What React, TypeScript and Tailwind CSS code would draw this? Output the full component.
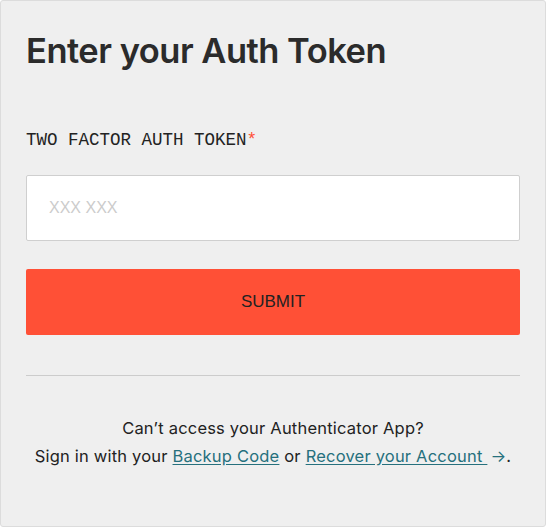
export default function App() {
  return (
    <div className="h-[527px] w-[546px] bg-white">
      <div className="h-[527px] w-[546px] rounded-[3px] border border-[#dcdcdc] bg-[#efefef] px-[25px] pt-[26px]" style={{ fontFamily: 'Inter, "Liberation Sans", sans-serif' }}>
        <h1 className="text-[34.5px] font-semibold leading-[48px] tracking-[-0.5px] text-[#2b2b2b]">Enter your Auth Token</h1>
        <label className="mt-[55px] block text-[17.5px] leading-[20px] text-[#222]" style={{ fontFamily: '"Liberation Mono", monospace' }}>
          TWO FACTOR AUTH TOKEN<span className="text-[#ff5036]">*</span>
        </label>
        <input
          className="mt-[25px] block h-[66px] w-full rounded-[2px] border border-[#cfcfcf] bg-white px-[22px] text-[16px] text-[#222] outline-none placeholder:text-[#cccccc]"
          placeholder="XXX XXX"
          style={{ fontFamily: '"Liberation Sans", sans-serif' }}
        />
        <button className="mt-[28px] flex h-[66px] w-full items-center justify-center rounded-[2px] bg-[#ff5036] text-[17px] text-[#222]" style={{ fontFamily: '"Liberation Sans", sans-serif' }}>
          SUBMIT
        </button>
        <div className="mt-[40px] h-px bg-[#cccccc]" />
        <div className="mt-[38px] text-center text-[16.5px] leading-[28px] tracking-[0.2px] text-[#222]">
          <p>Can’t access your Authenticator App?</p>
          <p>
            Sign in with your <a className="text-[#26707d] underline underline-offset-2">Backup Code</a> or{' '}
            <a className="text-[#26707d] underline underline-offset-2">Recover your Account&nbsp;</a>
            <span className="ml-[3px] text-[#26707d]">→</span>.
          </p>
        </div>
      </div>
    </div>
  )
}
